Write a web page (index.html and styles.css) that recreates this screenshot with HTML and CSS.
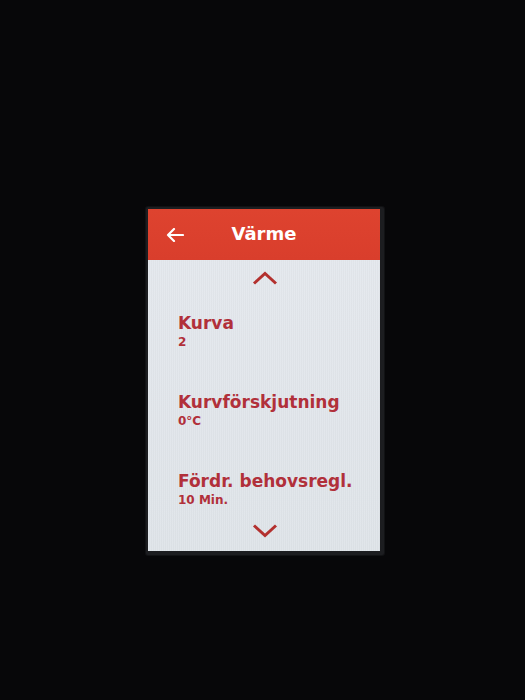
FILE: index.html
```html
<!DOCTYPE html>
<html lang="sv">
<head>
<meta charset="utf-8">
<title>Värme</title>
<link rel="stylesheet" href="styles.css">
</head>
<body>
<div class="stage">
  <div class="bezel">
    <div class="screen">
      <header class="header">
        <svg class="back" width="18" height="14" viewBox="0 0 18 14" aria-hidden="true">
          <path d="M17 7H2M8 1L2 7l6 6" fill="none" stroke="#fff" stroke-width="2.2" stroke-linecap="round" stroke-linejoin="round"/>
        </svg>
        <h1 class="title">Värme</h1>
      </header>
      <main class="content">
        <svg class="chev chev-up" width="26" height="14" viewBox="0 0 26 14" aria-hidden="true">
          <path d="M2 12.5L13 2.5l11 10" fill="none" stroke="#b3302e" stroke-width="3"/>
        </svg>
        <ul class="list">
          <li class="item"><span class="label">Kurva</span><span class="value">2</span></li>
          <li class="item"><span class="label">Kurvförskjutning</span><span class="value">0°C</span></li>
          <li class="item"><span class="label">Fördr. behovsregl.</span><span class="value">10 Min.</span></li>
        </ul>
        <svg class="chev chev-down" width="26" height="14" viewBox="0 0 26 14" aria-hidden="true">
          <path d="M2 1.5L13 11.5l11-10" fill="none" stroke="#b3302e" stroke-width="3"/>
        </svg>
      </main>
    </div>
  </div>
</div>
</body>
</html>
```

FILE: styles.css
```css
* { box-sizing: border-box; }
html, body {
  margin: 0;
  height: 100%;
  background: #070709;
}
body {
  font-family: "DejaVu Sans", Verdana, sans-serif;
}
.stage {
  padding: 207px 0 0 146px;
}
.bezel {
  width: 238px;
  height: 348px;
  padding: 2px;
  background: #1c1d20;
  border-radius: 2px;
  box-shadow: 0 0 0 1px #111214;
}
.screen {
  width: 232px;
  height: 342px;
  display: flex;
  flex-direction: column;
  background-color: #e2e6eb;
  background-image:
    repeating-linear-gradient(90deg, rgba(255,255,255,0.06) 0 1px, rgba(0,0,0,0.02) 1px 2px),
    linear-gradient(180deg, #e5e9ee 0%, #dfe4e9 100%);
}
.header {
  height: 51px;
  flex: none;
  display: flex;
  align-items: center;
  position: relative;
  background: linear-gradient(180deg, #de432f 0%, #d93e2c 100%);
}
.back {
  margin-left: 18px;
  margin-top: 1px;
}
.title {
  position: absolute;
  left: 0;
  right: 0;
  top: 14px;
  margin: 0;
  text-align: center;
  color: #fff;
  font-size: 18px;
  line-height: 22px;
  font-weight: bold;
  pointer-events: none;
}
.content {
  flex: 1;
  display: flex;
  flex-direction: column;
}
.chev {
  display: block;
  align-self: center;
  margin-left: 2px;
}
.chev-up { margin-top: 11px; }
.chev-down { margin-top: 17px; }
.list {
  list-style: none;
  margin: 28px 0 0;
  padding: 0 0 0 30px;
  display: flex;
  flex-direction: column;
  gap: 43px;
}
.item {
  display: flex;
  flex-direction: column;
  gap: 2px;
  color: #b1303a;
  font-weight: bold;
}
.label {
  font-size: 17px;
  line-height: 20px;
}
.value {
  font-size: 12px;
  line-height: 14px;
}
```
